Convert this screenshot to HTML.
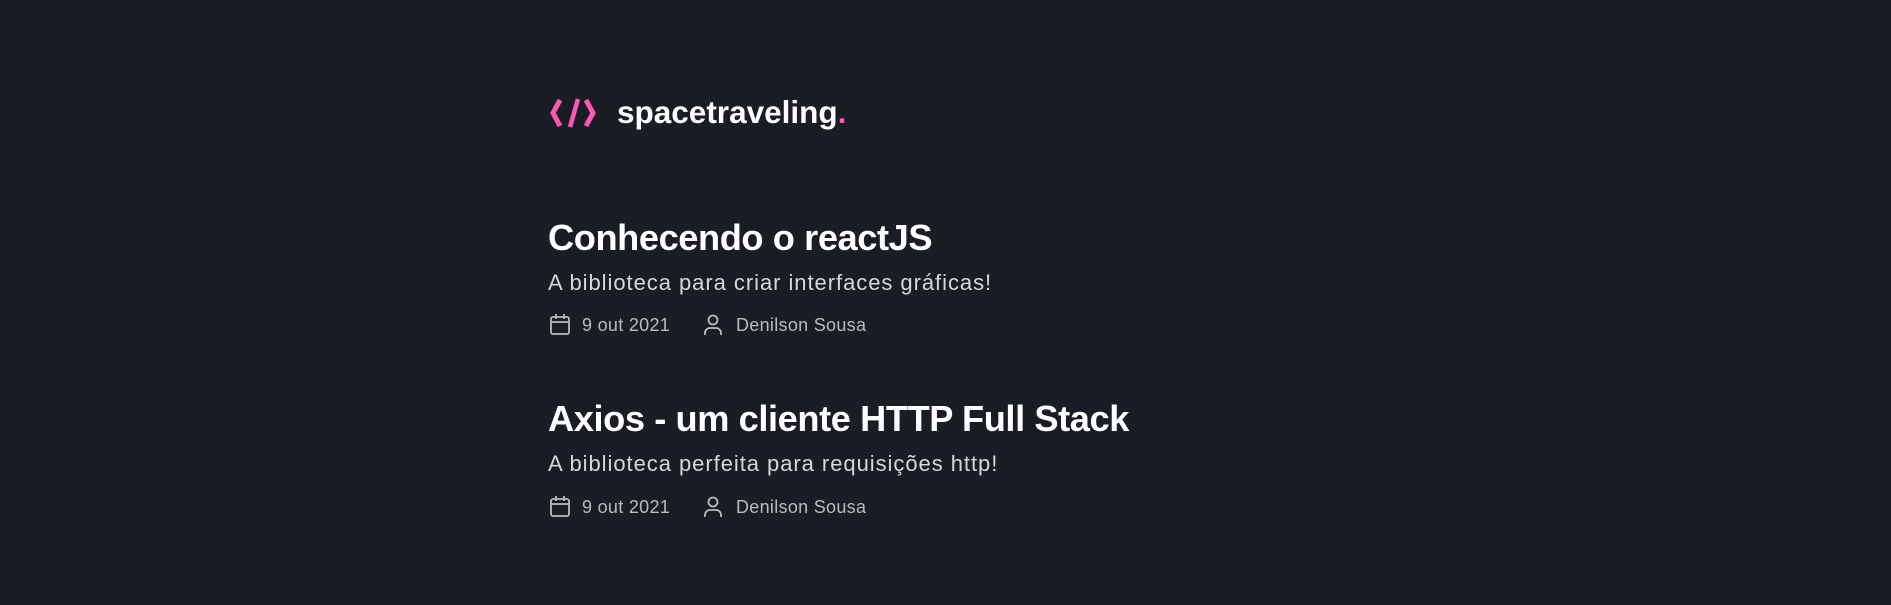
<!DOCTYPE html>
<html><head><meta charset="utf-8"><style>
html,body{margin:0;padding:0;background:#1a1d23;width:1891px;height:605px;overflow:hidden;font-family:"Liberation Sans",sans-serif;}
.a{position:absolute;white-space:nowrap;}
.t{color:#fff;font-weight:700;font-size:36.2px;line-height:40px;letter-spacing:-0.4px;}
.s{color:#d7d7d7;font-size:22px;line-height:24px;letter-spacing:0.95px;}
.m{color:#bbbbbb;font-size:18px;line-height:20px;letter-spacing:0.3px;}
</style></head><body>
<svg class="a" style="left:549px;top:98px" width="48" height="30" viewBox="0 0 48 30">
<path d="M11 2 L4 15 L11 28" stroke="#ff57b2" stroke-width="5" fill="none"/>
<path d="M29 1 L21 29" stroke="#ff57b2" stroke-width="4.5" fill="none"/>
<path d="M37 2 L44 15 L37 28" stroke="#ff57b2" stroke-width="5" fill="none"/>
</svg>
<div class="a" style="left:617px;top:94px;color:#fff;font-size:31.5px;font-weight:700;line-height:36px;">spacetraveling<span style="color:#ff57b2">.</span></div>

<div class="a t" style="left:548px;top:218px">Conhecendo o reactJS</div>
<div class="a s" style="left:548px;top:271px">A biblioteca para criar interfaces gráficas!</div>
<svg class="a" style="left:550px;top:314px" width="20" height="22" viewBox="0 0 20 22" fill="none" stroke="#bbb" stroke-width="1.8"><rect x="1" y="3" width="18" height="17" rx="2"/><path d="M1 8h18M6 0v5M14 0v5"/></svg>
<div class="a m" style="left:582px;top:315px">9 out 2021</div>
<svg class="a" style="left:703px;top:314px" width="20" height="22" viewBox="0 0 20 22" fill="none" stroke="#bbb" stroke-width="1.8"><circle cx="10" cy="6" r="4.5"/><path d="M2 21v-2a5 5 0 0 1 5-5h6a5 5 0 0 1 5 5v2"/></svg>
<div class="a m" style="left:736px;top:315px">Denilson Sousa</div>

<div class="a t" style="left:548px;top:399px">Axios - um cliente HTTP Full Stack</div>
<div class="a s" style="left:548px;top:452px">A biblioteca perfeita para requisições http!</div>
<svg class="a" style="left:550px;top:496px" width="20" height="22" viewBox="0 0 20 22" fill="none" stroke="#bbb" stroke-width="1.8"><rect x="1" y="3" width="18" height="17" rx="2"/><path d="M1 8h18M6 0v5M14 0v5"/></svg>
<div class="a m" style="left:582px;top:497px">9 out 2021</div>
<svg class="a" style="left:703px;top:496px" width="20" height="22" viewBox="0 0 20 22" fill="none" stroke="#bbb" stroke-width="1.8"><circle cx="10" cy="6" r="4.5"/><path d="M2 21v-2a5 5 0 0 1 5-5h6a5 5 0 0 1 5 5v2"/></svg>
<div class="a m" style="left:736px;top:497px">Denilson Sousa</div>
</body></html>
